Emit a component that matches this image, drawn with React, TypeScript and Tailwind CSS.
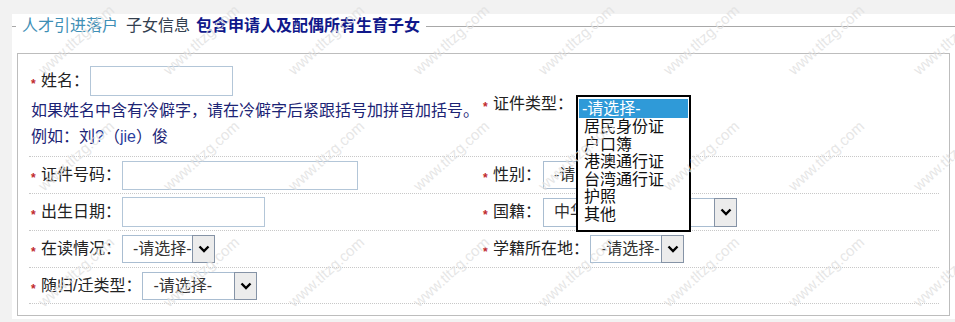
import React from "react";

const font = "font-['Liberation_Sans','Noto_Sans_CJK_SC',sans-serif]";

function Star() {
  return (
    <span className="mr-[4px] inline-block w-[6px] translate-y-[3px] text-[12px] font-bold leading-none text-[#c0272d]">*</span>
  );
}

function Chevron() {
  return (
    <svg width="12" height="8" viewBox="0 0 12 8">
      <path d="M1.5 1.5 L6 6 L10.5 1.5" fill="none" stroke="#000" strokeWidth="2.4" />
    </svg>
  );
}

function Select({ text, className }: { text: string; className: string }) {
  return (
    <div className={`flex border border-[#a9bdd1] bg-white ${className}`}>
      <span className="flex-1 overflow-hidden whitespace-nowrap pl-[10px] text-[16px] leading-[26px] text-[#333]">{text}</span>
      <span className="-my-px -mr-px flex w-[23px] items-center justify-center border border-[#8593a6] bg-[#ececec]">
        <Chevron />
      </span>
    </div>
  );
}

function Input({ className }: { className: string }) {
  return <div className={`border border-[#b3c6d8] bg-white ${className}`} />;
}

function Label({ children }: { children: React.ReactNode }) {
  return (
    <div className="flex items-center whitespace-nowrap text-[16px] text-[#222]">
      <Star />
      <span>{children}</span>
    </div>
  );
}

// watermark grid: end of each "www.tltzg.com" string
const marks: { x: number; y: number }[] = [];
for (let j = 0; j < 4; j++) {
  for (let k = -4; k < 4; k++) {
    marks.push({ x: 612 + k * 125, y: 8 + j * 116 });
  }
}

export default function App() {
  return (
    <div className={`relative h-[322px] w-[955px] overflow-hidden bg-[#f2f2f2] pl-[12px] pt-[14px] ${font}`}>
      <div className="h-[305px] bg-white">
        {/* legend */}
        <div className="flex h-[24px] items-center">
          <div className="h-px w-[4px] bg-[#a8a8a8]" />
          <div className="whitespace-nowrap px-[6px] text-[16px] leading-[24px]">
            <span className="text-[#3f8fb6]">人才引进落户</span>
            <span className="ml-[8px] text-[#34404f]">子女信息</span>
            <span className="ml-[6px] font-bold text-[#10188a]">包含申请人及配偶所有生育子女</span>
          </div>
          <div className="h-px flex-1 bg-[#a8a8a8]" />
        </div>

        {/* box */}
        <div className="ml-[5px] mt-[15px] h-[263px] w-[933px] border border-[#bdbdbd] pl-[11px] pr-[10px]">
          {/* row A */}
          <div className="grid h-[103px] grid-cols-[454px_1fr] border-b border-dotted border-[#c8c8c8]">
            <div className="pl-[2px] pt-[12px]">
              <div className="flex items-center">
                <Label>姓名：</Label>
                <Input className="ml-px h-[30px] w-[143px]" />
              </div>
              <div className="mt-[2px] whitespace-nowrap text-[16px] leading-[26px] text-[#1c2475]">
                如果姓名中含有冷僻字，请在冷僻字后紧跟括号加拼音加括号。
              </div>
              <div className="whitespace-nowrap text-[16px] leading-[26px] text-[#1c2475]">
                例如：刘<span className="text-[#2d3fa0]">?</span>（<span className="text-[#2d3fa0]">jie</span>）俊
              </div>
            </div>
            <div className="flex items-center pb-[2px]">
              <Label>证件类型：</Label>
            </div>
          </div>

          {/* row B */}
          <div className="grid h-[37px] grid-cols-[454px_1fr] border-b border-dotted border-[#c8c8c8]">
            <div className="flex items-center pl-[2px]">
              <Label>证件号码：</Label>
              <Input className="ml-px h-[29px] w-[236px]" />
            </div>
            <div className="flex items-center">
              <Label>性别：</Label>
              <Select text="-请" className="ml-[2px] h-[28px] w-[94px]" />
            </div>
          </div>

          {/* row C */}
          <div className="grid h-[37px] grid-cols-[454px_1fr] border-b border-dotted border-[#c8c8c8]">
            <div className="flex items-center pl-[2px]">
              <Label>出生日期：</Label>
              <Input className="ml-px h-[30px] w-[143px]" />
            </div>
            <div className="flex items-center">
              <Label>国籍：</Label>
              <Select text="中华" className="ml-[2px] h-[29px] w-[194px]" />
            </div>
          </div>

          {/* row D */}
          <div className="grid h-[37px] grid-cols-[454px_1fr] border-b border-dotted border-[#c8c8c8]">
            <div className="flex items-center pl-[2px]">
              <Label>在读情况：</Label>
              <Select text="-请选择-" className="ml-px h-[28px] w-[93px]" />
            </div>
            <div className="flex items-center">
              <Label>学籍所在地：</Label>
              <Select text="-请选择-" className="ml-px h-[28px] w-[94px]" />
            </div>
          </div>

          {/* row E */}
          <div className="grid h-[36px] grid-cols-[454px_1fr] border-b border-dotted border-[#c8c8c8]">
            <div className="flex items-center pl-[2px]">
              <Label>
                随归<span className="font-['Liberation_Sans']">/</span>迁类型：
              </Label>
              <Select text="-请选择-" className="ml-px h-[28px] w-[115px]" />
            </div>
            <div />
          </div>
        </div>
      </div>

      {/* open dropdown */}
      <div className="absolute left-[576px] top-[95px] h-[137px] w-[115px] border-2 border-black bg-white pt-[2px] text-[16px] text-[#111]">
        <div className="mx-px h-[19px] bg-[#2f9ad8] pl-[3px] leading-[19px] text-white">-请选择-</div>
        {["居民身份证", "户口簿", "港澳通行证", "台湾通行证", "护照", "其他"].map((o) => (
          <div key={o} className="h-[17.5px] whitespace-nowrap pl-[6px] leading-[17.5px]">
            {o}
          </div>
        ))}
      </div>

      {/* watermark */}
      <div className="pointer-events-none absolute inset-0">
        {marks.map((m, k) => (
          <div
            key={k}
            className="absolute h-[18px] w-[100px] origin-right -rotate-[42deg] whitespace-nowrap text-right font-['Liberation_Sans'] text-[15px] leading-[18px] text-[#e0e0e0]/80"
            style={{ left: m.x - 100, top: m.y - 9 }}
          >
            www.tltzg.com
          </div>
        ))}
      </div>
    </div>
  );
}
